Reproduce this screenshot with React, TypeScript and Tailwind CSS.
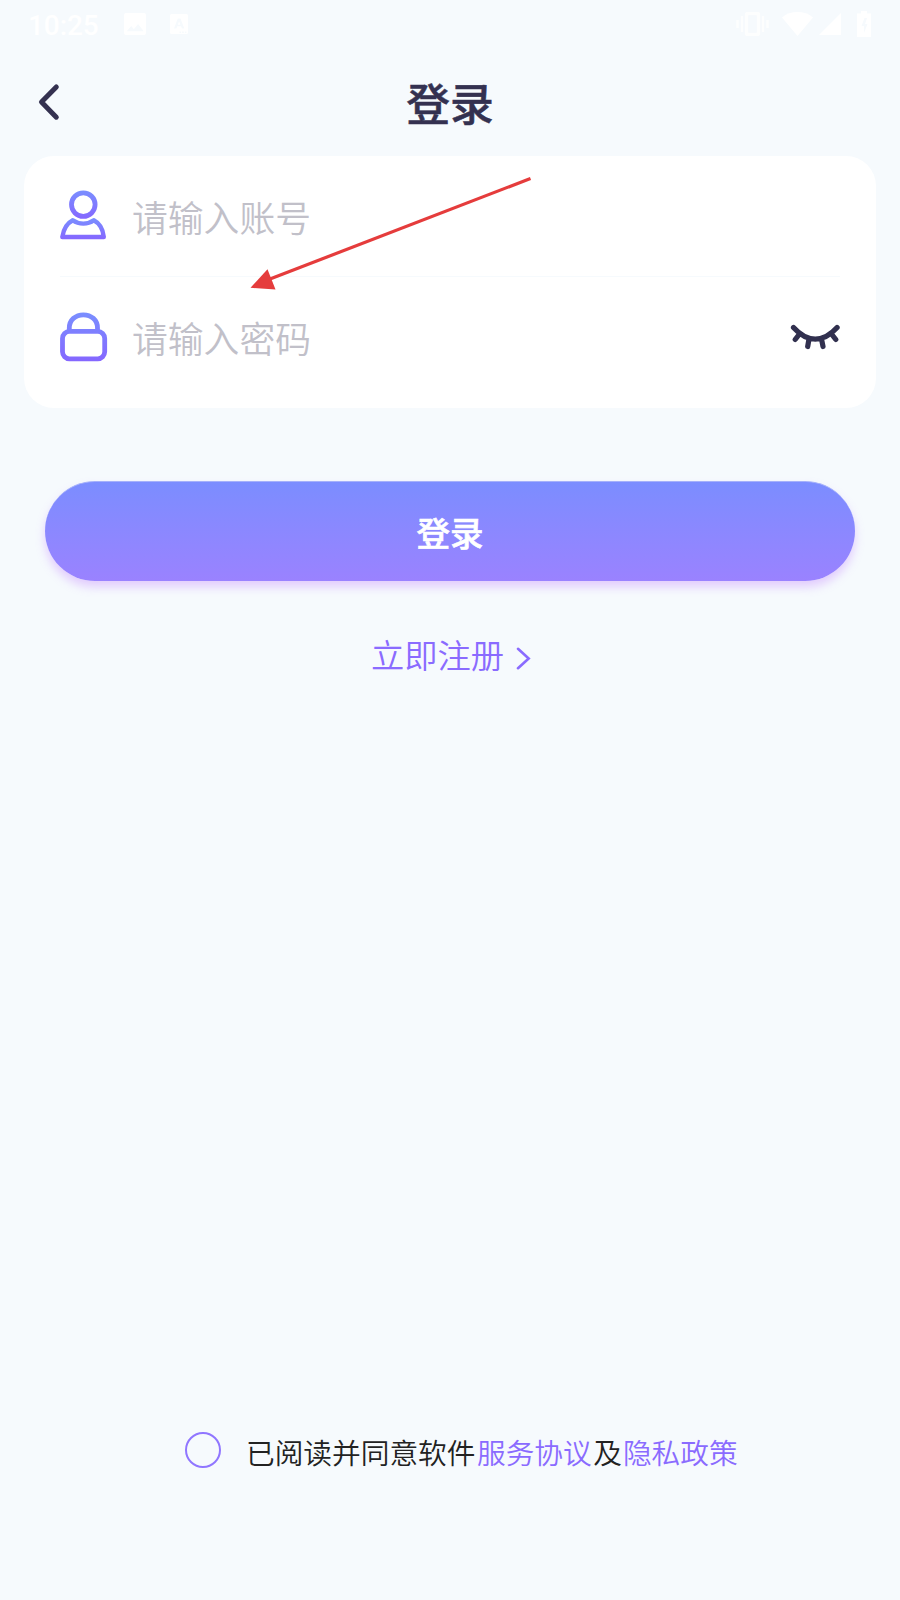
import type { ReactNode } from 'react'

function StatusBar() {
  return (
    <div className="flex h-12 items-center justify-between pt-0.5 pr-[29px] pl-7 text-white">
      <div className="flex items-center">
        <span className="w-24 pt-px font-[Roboto] text-[28px] leading-none font-medium tracking-[-0.1px]">
          10:25
        </span>
        <svg className="-mt-0.5 h-[22px] w-[22px]" viewBox="0 0 22 22" fill="currentColor">
          <path
            fillRule="evenodd"
            d="M2 0h18a2 2 0 0 1 2 2v18a2 2 0 0 1-2 2H2a2 2 0 0 1-2-2V2a2 2 0 0 1 2-2Zm.7 18.300h17L14.100 11l-4.300 5.200-2.500-3.100Z"
          />
        </svg>
        <svg className="-mt-0.5 ml-6 h-5 w-[18px]" viewBox="0 0 18 20" fill="currentColor">
          <path
            fillRule="evenodd"
            d="M1.500 0h15A1.500 1.500 0 0 1 18 1.500v17a1.500 1.500 0 0 1-1.500 1.500h-15A1.500 1.500 0 0 1 0 18.500v-17A1.500 1.500 0 0 1 1.500 0ZM7.800 4.500 4 14.500h2.400l.8-2.200h3.900l.8 2.200h2.400L10.500 4.500ZM9.100 7.200l1.300 3.500H7.800ZM9.500 17.500H11V19H9.500Zm2.700 0h1.500V19h-1.500Zm2.700 0h1.500V19h-1.500Z"
          />
        </svg>
      </div>
      <div className="-mt-0.5 flex items-center">
        <svg className="h-6 w-[33px] opacity-80" viewBox="0 0 33 24" fill="none" stroke="currentColor">
          <rect x="10.500" y="1.500" width="12" height="21" rx="1" strokeWidth="3.500" />
          <path d="M6 4v16M27 4v16M1.500 8v8M31.500 8v8" strokeWidth="2.500" />
        </svg>
        <svg className="ml-[13px] h-6 w-[31px]" viewBox="0 0 31 24" fill="currentColor">
          <path d="M0 5.500C4 1.800 10 0 15.500 0S27 1.800 31 5.500L15.500 24Z" />
        </svg>
        <svg className="ml-[6px] h-[22px] w-[22px]" viewBox="0 0 22 22" fill="currentColor">
          <path d="M22 0v22H0Z" />
        </svg>
        <svg className="ml-4 h-[26px] w-[14px]" viewBox="0 0 14 26" fill="currentColor">
          <path
            fillRule="evenodd"
            d="M4 0h6v2.500h4V26H0V2.500h4ZM7.500 7 4.500 15H7v7l3.500-9H8l2-6Z"
          />
        </svg>
      </div>
    </div>
  )
}

function BackIcon() {
  return (
    <svg className="h-10 w-6" viewBox="0 0 24 40" fill="none">
      <path
        d="M20.300 5 5.500 20l14.800 15.200"
        stroke="#343150"
        strokeWidth="5"
        strokeLinecap="round"
        strokeLinejoin="round"
      />
    </svg>
  )
}

function UserIcon() {
  return (
    <svg className="-mt-0.5 h-[50px] w-12 shrink-0" viewBox="0 0 48 50" fill="none">
      <defs>
        <linearGradient id="user-head" gradientUnits="userSpaceOnUse" x1="0" y1="0" x2="0" y2="29">
          <stop stopColor="#7a8fff" />
          <stop offset="1" stopColor="#8567ff" />
        </linearGradient>
        <linearGradient id="user-body" gradientUnits="userSpaceOnUse" x1="0" y1="28" x2="0" y2="49">
          <stop stopColor="#7a8fff" />
          <stop offset="1" stopColor="#8567ff" />
        </linearGradient>
      </defs>
      <circle cx="23.300" cy="14.600" r="11.800" stroke="url(#user-head)" strokeWidth="4.800" />
      <path
        d="M2.300 47C3.500 39.500 6.500 33.500 12.800 30.300c6 4.400 15 4.400 21 0C40 33.500 43 39.500 43.800 47Z"
        stroke="url(#user-body)"
        strokeWidth="4.400"
        strokeLinejoin="round"
      />
    </svg>
  )
}

function LockIcon() {
  return (
    <svg className="h-[50px] w-12 shrink-0" viewBox="0 0 48 50" fill="none">
      <defs>
        <linearGradient id="lock" gradientUnits="userSpaceOnUse" x1="0" y1="0" x2="0" y2="49">
          <stop stopColor="#7a8fff" />
          <stop offset="1" stopColor="#8567ff" />
        </linearGradient>
      </defs>
      <g stroke="url(#lock)" strokeWidth="4.800">
        <path d="M9.300 19v-3C9.300 8 15.500 2.800 23.400 2.800S37.500 8 37.500 16v3" />
        <rect x="2.500" y="19.400" width="42.200" height="27.400" rx="7" />
      </g>
    </svg>
  )
}

function EyeClosedIcon() {
  return (
    <svg className="h-[26px] w-[50px] shrink-0" viewBox="0 0 50 26" fill="none">
      <path
        d="M3.500 3.500c13.800 15.400 29.800 15.400 43.600 0M9.500 10 5.200 15.500M19 15l-1.300 7.500M31.500 15l1.500 7.500M41.500 10l4.300 5.500"
        stroke="#31304f"
        strokeWidth="5.200"
        strokeLinecap="round"
      />
    </svg>
  )
}

function Field({ icon, placeholder, children }: { icon: ReactNode; placeholder: string; children?: ReactNode }) {
  return (
    <div className="flex h-[120px] items-center">
      {icon}
      <span className="ml-6 flex-1 pt-px text-[35.800px] leading-none font-[350] text-[#c1c0c9]">{placeholder}</span>
      {children}
    </div>
  )
}

// Red annotation arrow lying over the form card
function Arrow() {
  return (
    <svg className="absolute top-[20px] left-[226px] h-[116px] w-[284px]" viewBox="0 0 284 116" fill="none">
      <path d="M280.500 2.500 20 103" stroke="#e53c3c" strokeWidth="3.200" />
      <path d="M.5 111.800 17.500 93.300 25.500 113.500Z" fill="#e53c3c" />
    </svg>
  )
}

export default function App() {
  return (
    <div className="flex h-[1600px] w-[900px] flex-col bg-[#f6fafd] font-['Noto_Sans_CJK_SC',sans-serif]">
      <StatusBar />
      <header className="grid h-[108px] grid-cols-[100px_1fr_100px] items-center">
        <button className="-mt-[1px] pl-9">
          <BackIcon />
        </button>
        <h1 className="pt-0.5 text-center text-[43.800px] leading-none font-medium text-[#343150] [-webkit-text-stroke:0.500px_#343150]">
          登录
        </h1>
      </header>

      <main className="flex flex-1 flex-col">
        <section className="relative mx-6 h-[252px] rounded-[30px] bg-white px-9">
          <Field icon={<UserIcon />} placeholder="请输入账号" />
          <div className="h-px bg-[#f6fafd]" />
          <Field icon={<LockIcon />} placeholder="请输入密码">
            <EyeClosedIcon />
          </Field>
          <Arrow />
        </section>

        <button className="mx-[45px] mt-[73px] h-[100px] rounded-full border-t border-[#a5b1fb] bg-linear-to-b from-[#7b8dff] to-[#9a82ff] text-[33.500px] leading-none font-medium text-white shadow-[0_6px_10px_rgba(190,120,255,0.350)] [-webkit-text-stroke:0.600px_white]">
          登录
        </button>

        <a className="mt-[55px] flex items-center justify-center pl-0.5 text-[33.300px] leading-9 font-[350] text-[#8a6bff]">
          立即注册
          <svg className="mt-[7px] ml-3 h-6 w-[15px]" viewBox="0 0 15 24" fill="none">
            <path d="M2 2.800 12.700 12.500 2 22.200" stroke="currentColor" strokeWidth="2.600" strokeLinecap="round" />
          </svg>
        </a>
      </main>

      <footer className="flex h-[168px] items-start pl-[185px]">
        <span className="h-9 w-9 rounded-full border-2 border-[#9076ff]" />
        <p className="ml-[25px] text-[28.700px] leading-10 font-[350] whitespace-nowrap text-[#222]">
          已阅读并同意软件<span className="mx-[1.500px] text-[#8a6bff]">服务协议</span>及
          <span className="ml-px text-[#8a6bff]">隐私政策</span>
        </p>
      </footer>
    </div>
  )
}
